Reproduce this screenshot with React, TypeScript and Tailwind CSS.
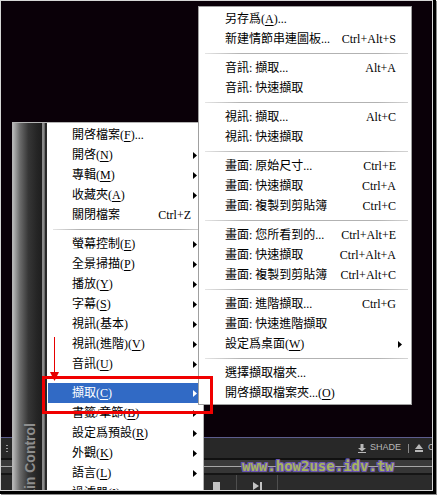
import React from "react";

type Row =
  | { sep: true }
  | {
      sep?: false;
      label: string;
      mk?: string;
      tail?: string;
      shortcut?: string;
      arrow?: boolean;
      active?: boolean;
    };

const mainRows: Row[] = [
  { label: "開啓檔案", mk: "F", tail: "..." },
  { label: "開啓", mk: "N", arrow: true },
  { label: "專輯", mk: "M", arrow: true },
  { label: "收藏夾", mk: "A", arrow: true },
  { label: "關閉檔案", shortcut: "Ctrl+Z" },
  { sep: true },
  { label: "螢幕控制", mk: "E", arrow: true },
  { label: "全景掃描", mk: "P", arrow: true },
  { label: "播放", mk: "Y", arrow: true },
  { label: "字幕", mk: "S", arrow: true },
  { label: "視訊(基本)", arrow: true },
  { label: "視訊(進階)", mk: "V", arrow: true },
  { label: "音訊", mk: "U", arrow: true },
  { sep: true },
  { label: "擷取", mk: "C", arrow: true, active: true },
  { label: "書籤/章節", mk: "B", arrow: true },
  { label: "設定爲預設", mk: "R", arrow: true },
  { label: "外觀", mk: "K", arrow: true },
  { label: "語言", mk: "L", arrow: true },
  { label: "過濾器", mk: "I", arrow: true },
];

const subRows: Row[] = [
  { label: "另存爲", mk: "A", tail: "..." },
  { label: "新建情節串連圖板...", shortcut: "Ctrl+Alt+S" },
  { sep: true },
  { label: "音訊: 擷取...", shortcut: "Alt+A" },
  { label: "音訊: 快速擷取" },
  { sep: true },
  { label: "視訊: 擷取...", shortcut: "Alt+C" },
  { label: "視訊: 快速擷取" },
  { sep: true },
  { label: "畫面: 原始尺寸...", shortcut: "Ctrl+E" },
  { label: "畫面: 快速擷取", shortcut: "Ctrl+A" },
  { label: "畫面: 複製到剪貼簿", shortcut: "Ctrl+C" },
  { sep: true },
  { label: "畫面: 您所看到的...", shortcut: "Ctrl+Alt+E" },
  { label: "畫面: 快速擷取", shortcut: "Ctrl+Alt+A" },
  { label: "畫面: 複製到剪貼簿", shortcut: "Ctrl+Alt+C" },
  { sep: true },
  { label: "畫面: 進階擷取...", shortcut: "Ctrl+G" },
  { label: "畫面: 快速進階擷取" },
  { label: "設定爲桌面", mk: "W", arrow: true },
  { sep: true },
  { label: "選擇擷取檔夾..." },
  { label: "開啓擷取檔案夾...", mk: "O" },
];

function Arrow({ white }: { white?: boolean }) {
  return (
    <svg width="4" height="7" viewBox="0 0 4 7" className={white ? "fill-white" : "fill-black"}>
      <path d="M0 0L4 3.5L0 7Z" />
    </svg>
  );
}

function MenuRows({ rows, sub }: { rows: Row[]; sub?: boolean }) {
  return (
    <>
      {rows.map((r, i) => {
        if (r.sep) {
          return (
            <div
              key={i}
              className={
                sub
                  ? "h-[9px] flex items-center pl-[6px] pr-[3px]"
                  : "h-[9px] flex items-center pl-[5px]"
              }
            >
              <div className="h-px w-full bg-[linear-gradient(to_right,#e4e4e4,#b2b2b2_18%,#b2b2b2_85%,#d4d4d4)]" />
            </div>
          );
        }
        return (
          <div
            key={i}
            className={
              (r.active ? "bg-[#316ac5] text-white " : "text-black ") +
              (sub ? "pl-[26px] " : "pl-[24px] ") +
              "h-[20px] flex items-center whitespace-nowrap"
            }
          >
            <span className="leading-[20px]">
              {r.label}
              {r.mk ? (
                <>
                  (<span className="underline decoration-1 underline-offset-[2px]">{r.mk}</span>)
                </>
              ) : null}
              {r.tail}
            </span>
            <span className="ml-auto leading-[20px]">{r.shortcut}</span>
            <span className={sub ? "w-[15px] flex items-center pl-[2px]" : "w-[11px] flex items-center pl-[2px]"}>
              {r.arrow ? <Arrow white={r.active} /> : null}
            </span>
          </div>
        );
      })}
    </>
  );
}

function MainMenu() {
  return (
    <div className="absolute left-[11px] top-[121px] w-[192px] h-[400px] border border-[#b4b4b4] bg-white flex font-['Liberation_Serif','Noto_Sans_CJK_TC',serif] text-[12px]">
      <div className="w-[34px] shrink-0 relative overflow-hidden bg-[linear-gradient(to_right,#b8b8b8_0%,#6c6c6c_20%,#363636_45%,#252525_70%,#1f1f1f_84%,#8a8a8a_86%,#8a8a8a_92%,#262626_94%,#2a2a2a_100%)]">
        <span className="absolute left-[9px] top-[300px] [writing-mode:vertical-rl] rotate-180 font-['Liberation_Sans',sans-serif] font-bold text-[14px] leading-[16px] text-[#8e8e8e] whitespace-nowrap">
          Main Control
        </span>
      </div>
      <div className="flex-1 pt-[2px] px-px">
        <MenuRows rows={mainRows} />
      </div>
    </div>
  );
}

function SubMenu() {
  return (
    <div className="absolute left-[197px] top-[5px] w-[214px] border border-[#a0a0a0] bg-white pt-[2px] pb-px font-['Liberation_Serif','Noto_Sans_CJK_TC',serif] text-[12px]">
      <MenuRows rows={subRows} sub />
    </div>
  );
}

function PlayerBar() {
  return (
    <div className="h-[53px] shrink-0 flex flex-col font-['Liberation_Sans',sans-serif]">
      <div className="h-px bg-[#5d5d8e]" />
      <div className="h-[21px] bg-[#282828] flex items-center">
        <div className="ml-[5px] w-[3px] flex flex-col gap-[2px]">
          <div className="flex justify-between"><span className="w-px h-px bg-[#9a9a9a]" /><span className="w-px h-px bg-[#9a9a9a]" /></div>
          <div className="flex justify-between"><span className="w-px h-px bg-[#9a9a9a]" /><span className="w-px h-px bg-[#9a9a9a]" /></div>
          <div className="flex justify-between"><span className="w-px h-px bg-[#9a9a9a]" /><span className="w-px h-px bg-[#9a9a9a]" /></div>
        </div>
        <div className="ml-[350px] flex items-center text-[#b8b8b8] text-[9px] whitespace-nowrap">
          <svg width="8" height="9" viewBox="0 0 8 9" className="fill-[#b8b8b8]">
            <rect x="2.5" y="0" width="3" height="4" />
            <path d="M0 4H8L4 7.5Z" />
            <rect x="0" y="8" width="8" height="1" />
          </svg>
          <span className="ml-[4px]">SHADE</span>
          <span className="ml-[7px] w-px h-[9px] bg-[#8a8a8a]" />
          <svg width="8" height="8" viewBox="0 0 8 8" className="ml-[6px] fill-[#b8b8b8]">
            <path d="M4 0L8 5H0Z" />
            <rect x="0" y="6" width="8" height="2" />
          </svg>
          <span className="ml-[5px]">OPEN</span>
        </div>
      </div>
      <div className="h-[2px] bg-[#111111]" />
      <div className="h-[6px] bg-[#3a3a3a]" />
      <div className="h-px bg-[#a6a6a6]" />
      <div className="h-[6px] bg-[#363636]" />
      <div className="h-[2px] bg-[#151515]" />
      <div className="flex-1 bg-[#2b2b2b] flex">
        <div className="ml-[212px] mt-[7px] w-[7px] h-[8px] bg-[#c4c4c4]" />
        <div className="ml-[16px] w-px bg-[#4e4e4e]" />
        <svg width="9" height="8" viewBox="0 0 9 8" className="ml-[16px] mt-[7px] fill-[#c4c4c4]">
          <path d="M0 0L6 4L0 8Z" />
          <rect x="7" y="0" width="2" height="8" />
        </svg>
        <div className="ml-[15px] w-px bg-[#4e4e4e]" />
      </div>
    </div>
  );
}

export default function App() {
  return (
    <div className="w-[438px] h-[497px] bg-white">
      <div className="w-[436px] h-[494px] border-r-[3px] border-b-[3px] border-black shadow-[1px_1px_0_#8c8c8c]">
        <div className="w-full h-full border border-[#d6d6d6] bg-[#0a0008] relative overflow-hidden flex flex-col">
          <div className="flex-1" />
          <PlayerBar />
          <MainMenu />
          <SubMenu />
          <div className="absolute left-[241px] top-[456px] font-['DejaVu_Sans_Mono',monospace] font-bold text-[14px] leading-[18px] text-[#a6b45e] [text-shadow:1px_0_0_#6c56b4,-1px_0_0_#6c56b4,0_1px_0_#6c56b4,0_-1px_0_#6c56b4,1px_1px_0_#6c56b4,-1px_-1px_0_#6c56b4,1px_-1px_0_#6c56b4,-1px_1px_0_#6c56b4]">
            www.how2use.idv.tw
          </div>
          <div className="absolute left-[53px] top-[336px] w-px h-[37px] bg-[#e60000]" />
          <svg width="9" height="9" viewBox="0 0 9 9" className="absolute left-[49px] top-[371px] fill-[#e60000]">
            <path d="M0 0H9L4.5 9Z" />
          </svg>
          <div className="absolute left-[41px] top-[375px] w-[171px] h-[38px] border-[3px] border-[#f00000]" />
        </div>
      </div>
    </div>
  );
}
